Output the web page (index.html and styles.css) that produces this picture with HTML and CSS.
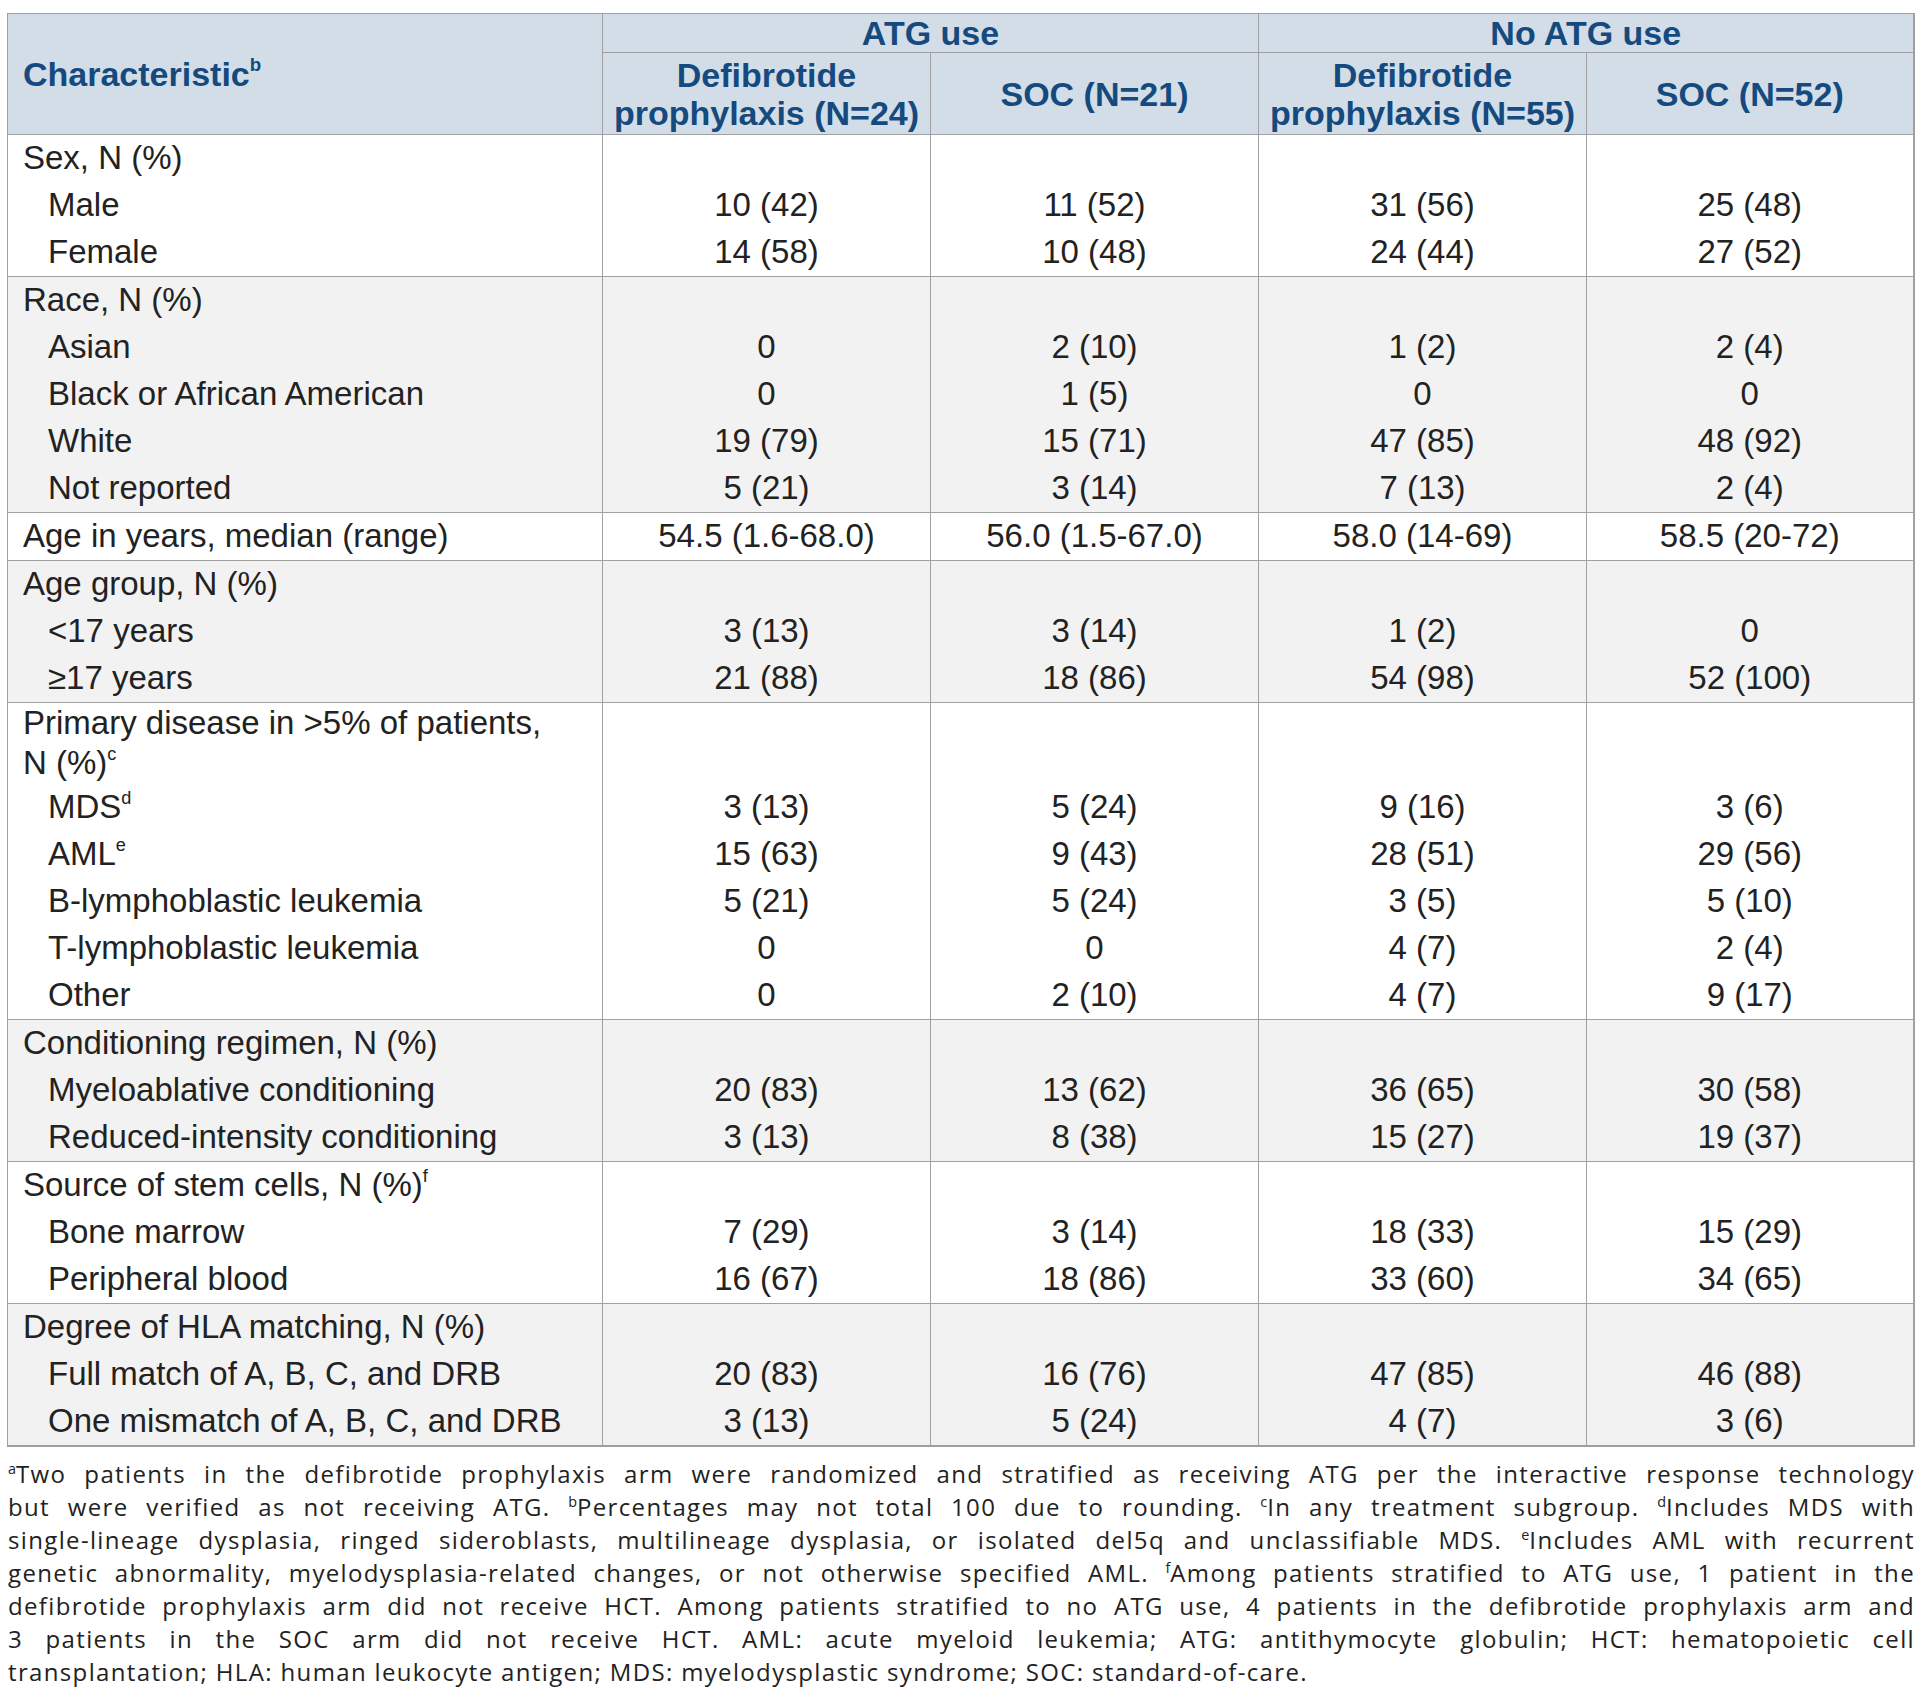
FILE: index.html
```html
<!DOCTYPE html>
<html lang="en">
<head>
<meta charset="utf-8">
<title>Baseline characteristics by ATG use</title>
<link rel="stylesheet" href="styles.css">
</head>
<body>
<div class="page">
  <table class="chars">
    <colgroup>
      <col class="c-label">
      <col class="c-data">
      <col class="c-data">
      <col class="c-data">
      <col class="c-last">
    </colgroup>
    <thead>
      <tr class="h1">
        <th rowspan="2" class="th-label">Characteristic<sup>b</sup></th>
        <th colspan="2">ATG use</th>
        <th colspan="2">No ATG use</th>
      </tr>
      <tr class="h2">
        <th>Defibrotide<br>prophylaxis (N=24)</th>
        <th>SOC (N=21)</th>
        <th>Defibrotide<br>prophylaxis (N=55)</th>
        <th>SOC (N=52)</th>
      </tr>
    </thead>
    <tbody class="grp">
      <tr><td class="lbl">Sex, N (%)</td><td></td><td></td><td></td><td></td></tr>
      <tr><td class="lbl sub">Male</td><td>10 (42)</td><td>11 (52)</td><td>31 (56)</td><td>25 (48)</td></tr>
      <tr><td class="lbl sub">Female</td><td>14 (58)</td><td>10 (48)</td><td>24 (44)</td><td>27 (52)</td></tr>
    </tbody>
    <tbody class="grp alt">
      <tr><td class="lbl">Race, N (%)</td><td></td><td></td><td></td><td></td></tr>
      <tr><td class="lbl sub">Asian</td><td>0</td><td>2 (10)</td><td>1 (2)</td><td>2 (4)</td></tr>
      <tr><td class="lbl sub">Black or African American</td><td>0</td><td>1 (5)</td><td>0</td><td>0</td></tr>
      <tr><td class="lbl sub">White</td><td>19 (79)</td><td>15 (71)</td><td>47 (85)</td><td>48 (92)</td></tr>
      <tr><td class="lbl sub">Not reported</td><td>5 (21)</td><td>3 (14)</td><td>7 (13)</td><td>2 (4)</td></tr>
    </tbody>
    <tbody class="grp">
      <tr><td class="lbl">Age in years, median (range)</td><td>54.5 (1.6-68.0)</td><td>56.0 (1.5-67.0)</td><td>58.0 (14-69)</td><td>58.5 (20-72)</td></tr>
    </tbody>
    <tbody class="grp alt">
      <tr><td class="lbl">Age group, N (%)</td><td></td><td></td><td></td><td></td></tr>
      <tr><td class="lbl sub">&lt;17 years</td><td>3 (13)</td><td>3 (14)</td><td>1 (2)</td><td>0</td></tr>
      <tr><td class="lbl sub">≥17 years</td><td>21 (88)</td><td>18 (86)</td><td>54 (98)</td><td>52 (100)</td></tr>
    </tbody>
    <tbody class="grp">
      <tr class="wrap"><td class="lbl">Primary disease in &gt;5% of patients, N&nbsp;(%)<sup>c</sup></td><td></td><td></td><td></td><td></td></tr>
      <tr><td class="lbl sub">MDS<sup>d</sup></td><td>3 (13)</td><td>5 (24)</td><td>9 (16)</td><td>3 (6)</td></tr>
      <tr><td class="lbl sub">AML<sup>e</sup></td><td>15 (63)</td><td>9 (43)</td><td>28 (51)</td><td>29 (56)</td></tr>
      <tr><td class="lbl sub">B-lymphoblastic leukemia</td><td>5 (21)</td><td>5 (24)</td><td>3 (5)</td><td>5 (10)</td></tr>
      <tr><td class="lbl sub">T-lymphoblastic leukemia</td><td>0</td><td>0</td><td>4 (7)</td><td>2 (4)</td></tr>
      <tr><td class="lbl sub">Other</td><td>0</td><td>2 (10)</td><td>4 (7)</td><td>9 (17)</td></tr>
    </tbody>
    <tbody class="grp alt">
      <tr><td class="lbl">Conditioning regimen, N (%)</td><td></td><td></td><td></td><td></td></tr>
      <tr><td class="lbl sub">Myeloablative conditioning</td><td>20 (83)</td><td>13 (62)</td><td>36 (65)</td><td>30 (58)</td></tr>
      <tr><td class="lbl sub">Reduced-intensity conditioning</td><td>3 (13)</td><td>8 (38)</td><td>15 (27)</td><td>19 (37)</td></tr>
    </tbody>
    <tbody class="grp">
      <tr><td class="lbl">Source of stem cells, N (%)<sup>f</sup></td><td></td><td></td><td></td><td></td></tr>
      <tr><td class="lbl sub">Bone marrow</td><td>7 (29)</td><td>3 (14)</td><td>18 (33)</td><td>15 (29)</td></tr>
      <tr><td class="lbl sub">Peripheral blood</td><td>16 (67)</td><td>18 (86)</td><td>33 (60)</td><td>34 (65)</td></tr>
    </tbody>
    <tbody class="grp alt last">
      <tr><td class="lbl">Degree of HLA matching, N (%)</td><td></td><td></td><td></td><td></td></tr>
      <tr><td class="lbl sub">Full match of A, B, C, and DRB</td><td>20 (83)</td><td>16 (76)</td><td>47 (85)</td><td>46 (88)</td></tr>
      <tr><td class="lbl sub">One mismatch of A, B, C, and DRB</td><td>3 (13)</td><td>5 (24)</td><td>4 (7)</td><td>3 (6)</td></tr>
    </tbody>
  </table>

  <p class="notes">
    <span class="ln"><sup>a</sup>Two patients in the defibrotide prophylaxis arm were randomized and stratified as receiving ATG per the interactive response technology</span>
    <span class="ln">but were verified as not receiving ATG. <sup>b</sup>Percentages may not total 100 due to rounding. <sup>c</sup>In any treatment subgroup. <sup>d</sup>Includes MDS with</span>
    <span class="ln">single-lineage dysplasia, ringed sideroblasts, multilineage dysplasia, or isolated del5q and unclassifiable MDS. <sup>e</sup>Includes AML with recurrent</span>
    <span class="ln">genetic abnormality, myelodysplasia-related changes, or not otherwise specified AML. <sup>f</sup>Among patients stratified to ATG use, 1 patient in the</span>
    <span class="ln">defibrotide prophylaxis arm did not receive HCT. Among patients stratified to no ATG use, 4 patients in the defibrotide prophylaxis arm and</span>
    <span class="ln">3 patients in the SOC arm did not receive HCT. AML: acute myeloid leukemia; ATG: antithymocyte globulin; HCT: hematopoietic cell</span>
    <span class="ln end">transplantation; HLA: human leukocyte antigen; MDS: myelodysplastic syndrome; SOC: standard-of-care.</span>
  </p>
</div>
</body>
</html>
```

FILE: styles.css
```css
html, body {
  margin: 0;
  padding: 0;
  background: #ffffff;
}

.page {
  padding: 13px 0 0 7px;
  width: 1908px;
}

.chars {
  border-collapse: collapse;
  table-layout: fixed;
  width: 1907px;
  font-family: "Liberation Sans", Arial, sans-serif;
  font-size: 33px;
  color: #222222;
  border-top: 1px solid #a0a0a0;
  border-left: 1px solid #a0a0a0;
  border-right: 2px solid #a0a0a0;
  border-bottom: 2px solid #a0a0a0;
}

.c-label { width: 595px; }
.c-data { width: 328px; }
.c-last { width: 327px; }

.chars th {
  background: #d3dde7;
  color: #154a7f;
  font-family: "Liberation Sans", Arial, sans-serif;
  font-weight: bold;
  font-size: 34px;
  line-height: 38px;
  text-align: center;
  vertical-align: middle;
  border: 1px solid #a0a0a0;
  padding: 0 6px;
}

.chars .h1 th {
  height: 38px;
  padding-top: 0;
  padding-bottom: 0;
}

.chars .h2 th {
  padding-top: 3px;
  padding-bottom: 2px;
}

.chars th.th-label {
  text-align: left;
  padding-left: 15px;
}

.chars td {
  line-height: 40px;
  padding: 3px 8px 4px;
  text-align: center;
  vertical-align: middle;
  border-left: 1px solid #a0a0a0;
  border-right: 1px solid #a0a0a0;
  white-space: nowrap;
}

.chars td.lbl {
  text-align: left;
  padding-left: 15px;
  padding-right: 12px;
  white-space: normal;
}

.chars td.sub {
  padding-left: 40px;
}

.chars tr.wrap td {
  padding-top: 0;
  padding-bottom: 1px;
}

.chars tbody.grp > tr:first-child > td {
  border-top: 1px solid #a0a0a0;
}

.chars tbody.alt td {
  background: #f2f2f2;
}

.chars sup {
  font-size: 55%;
  line-height: 0;
  vertical-align: 0.75em;
  font-weight: normal;
}

.chars th sup {
  font-weight: bold;
  vertical-align: 0.8em;
}

.notes {
  margin: 10px 0 0 1px;
  width: 1907px;
  font-family: "Open Sans", "Noto Sans", sans-serif;
  font-size: 24px;
  line-height: 33px;
  letter-spacing: 1.35px;
  color: #222222;
}

.notes .ln {
  display: block;
  white-space: nowrap;
  text-align: justify;
  text-align-last: justify;
}

.notes .ln.end {
  text-align-last: left;
}

.notes sup {
  font-size: 60%;
  line-height: 0;
  vertical-align: 0.6em;
  letter-spacing: 0;
}
```
